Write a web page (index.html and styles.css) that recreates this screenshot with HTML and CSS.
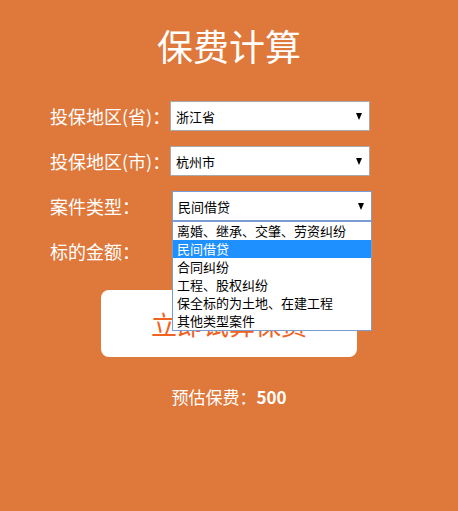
FILE: index.html
```html
<!DOCTYPE html>
<html lang="zh-CN">
<head>
    <meta charset="UTF-8">
    <meta name="viewport" content="width=device-width, initial-scale=1.0">
    <title>保费计算</title>
    <link rel="stylesheet" href="styles.css">
</head>
<body>
    <div class="container">
        <h1 class="title">保费计算</h1>

        <div class="form">
            <div class="row">
                <label class="label">投保地区(省)<span class="colon">：</span></label>
                <div class="select">
                    <span class="select-text">浙江省</span>
                    <span class="arrow"></span>
                </div>
            </div>
            <div class="row">
                <label class="label">投保地区(市)<span class="colon">：</span></label>
                <div class="select">
                    <span class="select-text">杭州市</span>
                    <span class="arrow"></span>
                </div>
            </div>
            <div class="row">
                <label class="label">案件类型<span class="colon">：</span></label>
                <div class="select select-open">
                    <span class="select-text">民间借贷</span>
                    <span class="arrow"></span>
                    <ul class="options">
                        <li>离婚、继承、交肇、劳资纠纷</li>
                        <li class="active">民间借贷</li>
                        <li>合同纠纷</li>
                        <li>工程、股权纠纷</li>
                        <li>保全标的为土地、在建工程</li>
                        <li>其他类型案件</li>
                    </ul>
                </div>
            </div>
            <div class="row">
                <label class="label">标的金额<span class="colon">：</span></label>
                <input class="amount" type="text">
            </div>
        </div>

        <button class="calc-btn">立即试算保费</button>

        <p class="result">预估保费<span class="colon">：</span><span class="fee">500</span></p>
    </div>
</body>
</html>
```

FILE: styles.css
```css
body {
    margin: 0;
    font-family: "Noto Sans CJK SC", "Liberation Sans", sans-serif;
    background: #df783b;
    color: #fff;
    height: 511px;
}
.container {
    padding-top: 24px;
}
.title {
    margin: 0;
    font-size: 36px;
    font-weight: normal;
    line-height: 43px;
    text-align: center;
}
.colon {
    font-family: "Noto Sans CJK TC", sans-serif;
}
.form {
    margin-top: 34px;
    padding-left: 50px;
    display: flex;
    flex-direction: column;
    gap: 15px;
}
.row {
    display: flex;
    align-items: center;
    height: 30px;
}
.label {
    width: 120px;
    font-size: 18px;
    white-space: nowrap;
}
.select {
    position: relative;
    box-sizing: border-box;
    width: 200px;
    height: 30px;
    background: #fff;
    border: 1px solid #a9a9a9;
    color: #000;
    font-size: 13px;
    display: flex;
    align-items: center;
    justify-content: space-between;
    padding: 0 7px 0 5px;
}
.select-open {
    margin-left: 2px;
    border-color: #7a9cd3;
}
.arrow {
    width: 0;
    height: 0;
    border-left: 3px solid transparent;
    border-right: 3px solid transparent;
    border-top: 7px solid #000;
}
.options {
    position: absolute;
    top: 100%;
    left: -1px;
    width: 200px;
    box-sizing: border-box;
    margin: 1px 0 0;
    padding: 0;
    list-style: none;
    background: #fff;
    border: 1px solid #7a9cd3;
    z-index: 2;
}
.options li {
    height: 18px;
    line-height: 18px;
    padding-left: 4px;
    font-size: 13px;
    white-space: nowrap;
}
.options li.active {
    background: #1e90ff;
    color: #fff;
}
.amount {
    box-sizing: border-box;
    margin-left: 2px;
    width: 200px;
    height: 30px;
    border: 1px solid #fff;
}
.calc-btn {
    display: block;
    margin: 24px auto 0;
    width: 256px;
    height: 67px;
    border: none;
    border-radius: 8px;
    background: #fff;
    color: #f0631f;
    font-family: inherit;
    font-size: 26px;
}
.result {
    margin: 28px 0 0;
    font-size: 17px;
    line-height: 24px;
    text-align: center;
}
.fee {
    font-weight: bold;
}
```
